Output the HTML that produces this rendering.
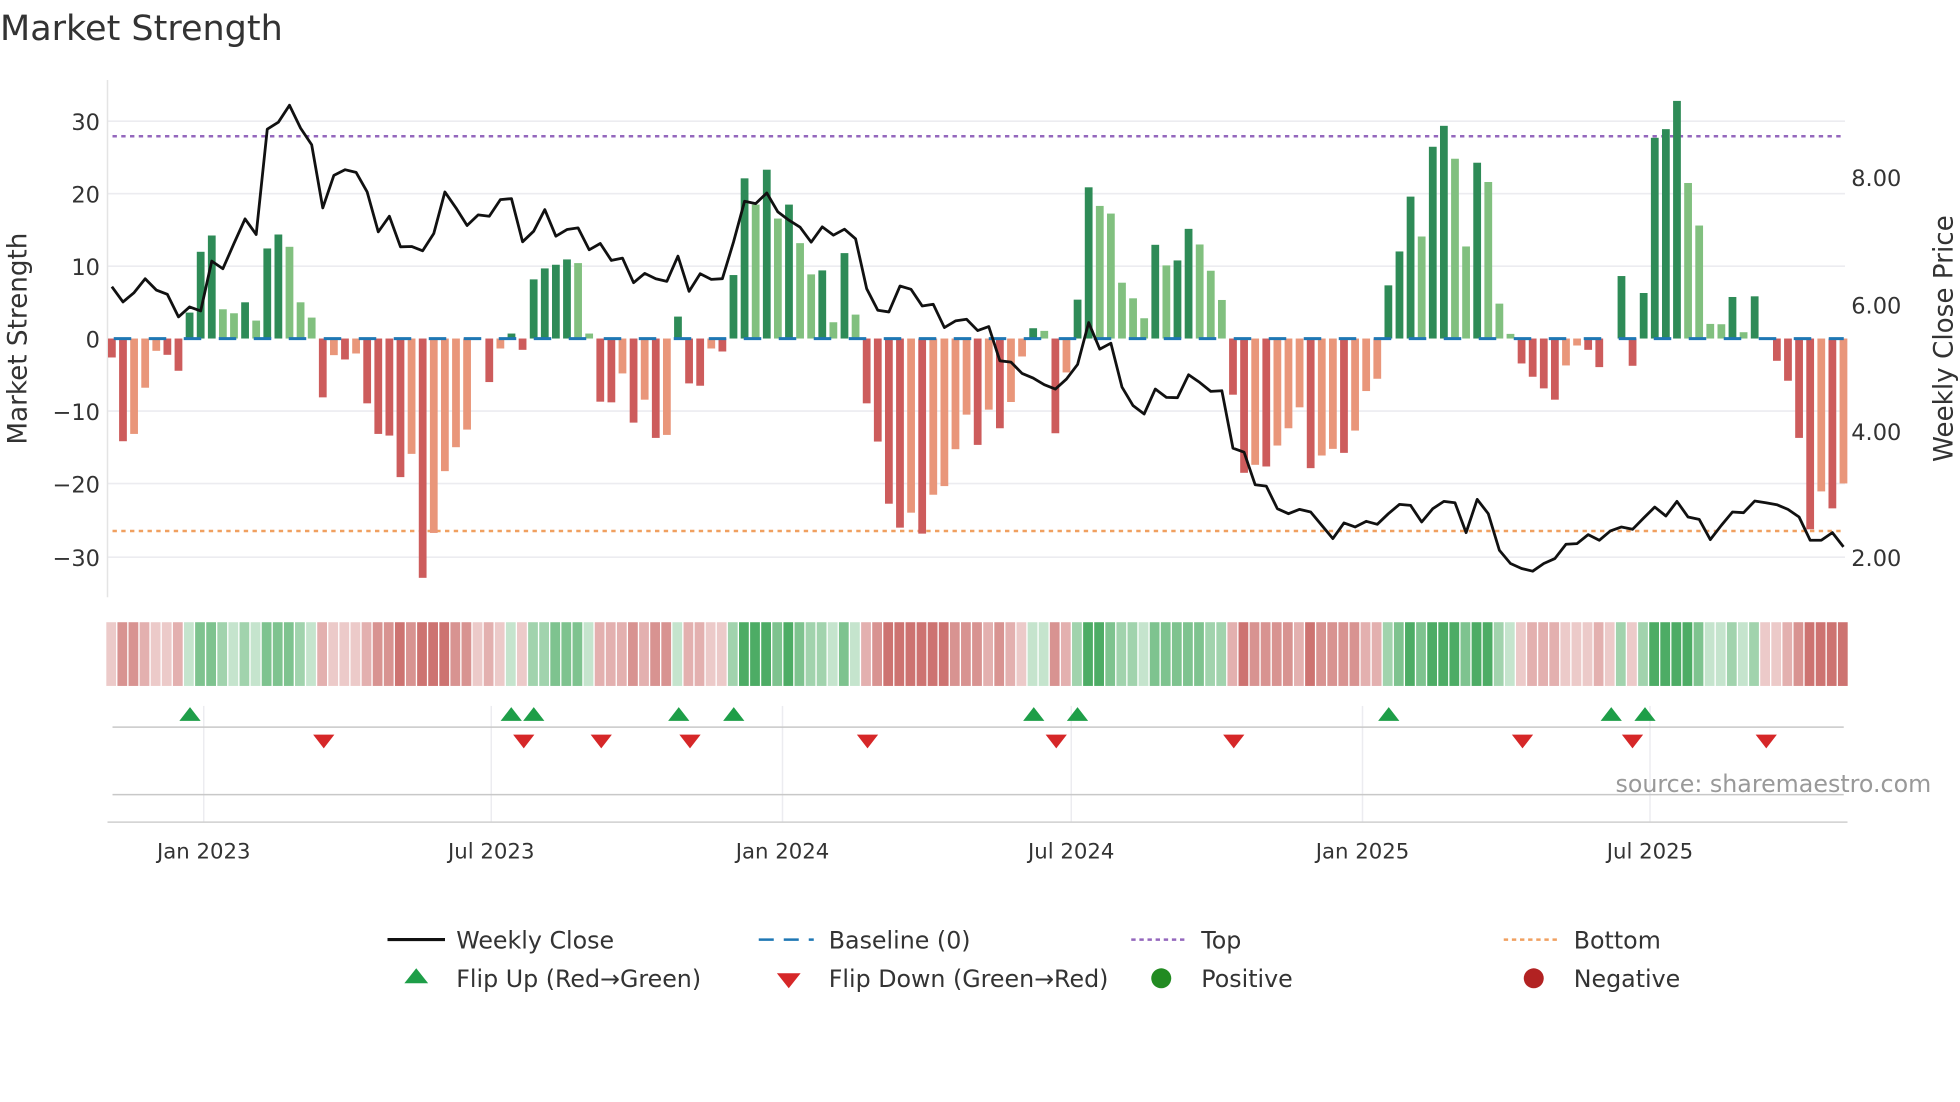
<!DOCTYPE html>
<html><head><meta charset="utf-8"><style>
html,body{margin:0;padding:0;background:#fff;}
svg{display:block;font-family:"DejaVu Sans","Liberation Sans",sans-serif;}
.a{fill:#2e8b57}.b{fill:#81c07f}.c{fill:#cd5c5c}.d{fill:#e9967a}
.r1{fill:#c0504d;opacity:.3}.r2{fill:#c0504d;opacity:.45}.r3{fill:#c0504d;opacity:.62}.r4{fill:#c0504d;opacity:.8}
.g1{fill:#2e9e4a;opacity:.28}.g2{fill:#2e9e4a;opacity:.45}.g3{fill:#2e9e4a;opacity:.62}.g4{fill:#2e9e4a;opacity:.85}
text{fill:#333}
</style></head><body>
<svg width="1960" height="1102" viewBox="0 0 1568 882" preserveAspectRatio="none">
<text x="0" y="32" font-size="28" fill="#333">Market Strength</text>
<g stroke="#ececf0" stroke-width="1.3">
<line x1="86" y1="97" x2="1476" y2="97"/><line x1="86" y1="155" x2="1476" y2="155"/><line x1="86" y1="213" x2="1476" y2="213"/><line x1="86" y1="329" x2="1476" y2="329"/><line x1="86" y1="387" x2="1476" y2="387"/><line x1="86" y1="446" x2="1476" y2="446"/>
</g>
<line x1="86" y1="64" x2="86" y2="478" stroke="#e4e4e4" stroke-width="1.2"/>
<g font-size="18" text-anchor="end">
<text x="80" y="104">30</text><text x="80" y="162">20</text><text x="80" y="220">10</text><text x="80" y="278">0</text><text x="80" y="336">−10</text><text x="80" y="394">−20</text><text x="80" y="453">−30</text>
</g>
<g font-size="18">
<text x="1481" y="149">8.00</text><text x="1481" y="251">6.00</text><text x="1481" y="352">4.00</text><text x="1481" y="453">2.00</text>
</g>
<text transform="translate(21,271) rotate(-90)" font-size="21" text-anchor="middle">Market Strength</text>
<text transform="translate(1562,271) rotate(-90)" font-size="21" text-anchor="middle">Weekly Close Price</text>
<line x1="90" y1="109" x2="1476" y2="109" stroke="#9467bd" stroke-width="2" stroke-dasharray="3.5 3.5"/>
<line x1="90" y1="425" x2="1476" y2="425" stroke="#f0a060" stroke-width="2" stroke-dasharray="3.5 3.5"/>
<g transform="translate(89.5,64) scale(8.88,0.266)">
<rect class="c" x="-.35" width=".7" y="778" height="57"/>
<rect class="c" x=".65" width=".7" y="778" height="309"/>
<rect class="d" x="1.65" width=".7" y="778" height="287"/>
<rect class="d" x="2.65" width=".7" y="778" height="148"/>
<rect class="d" x="3.65" width=".7" y="778" height="37"/>
<rect class="c" x="4.65" width=".7" y="778" height="49"/>
<rect class="c" x="5.65" width=".7" y="778" height="97"/>
<rect class="a" x="6.65" width=".7" y="700" height="78"/>
<rect class="a" x="7.65" width=".7" y="517" height="261"/>
<rect class="a" x="8.65" width=".7" y="468" height="310"/>
<rect class="b" x="9.65" width=".7" y="690" height="88"/>
<rect class="b" x="10.65" width=".7" y="702" height="76"/>
<rect class="a" x="11.65" width=".7" y="669" height="109"/>
<rect class="b" x="12.65" width=".7" y="724" height="54"/>
<rect class="a" x="13.65" width=".7" y="507" height="271"/>
<rect class="a" x="14.65" width=".7" y="465" height="313"/>
<rect class="b" x="15.65" width=".7" y="502" height="276"/>
<rect class="b" x="16.65" width=".7" y="669" height="109"/>
<rect class="b" x="17.65" width=".7" y="715" height="63"/>
<rect class="c" x="18.65" width=".7" y="778" height="177"/>
<rect class="d" x="19.65" width=".7" y="778" height="50"/>
<rect class="c" x="20.65" width=".7" y="778" height="63"/>
<rect class="d" x="21.65" width=".7" y="778" height="45"/>
<rect class="c" x="22.65" width=".7" y="778" height="195"/>
<rect class="c" x="23.65" width=".7" y="778" height="287"/>
<rect class="c" x="24.65" width=".7" y="778" height="292"/>
<rect class="c" x="25.65" width=".7" y="778" height="417"/>
<rect class="d" x="26.65" width=".7" y="778" height="347"/>
<rect class="c" x="27.65" width=".7" y="778" height="720"/>
<rect class="d" x="28.65" width=".7" y="778" height="585"/>
<rect class="d" x="29.65" width=".7" y="778" height="399"/>
<rect class="d" x="30.65" width=".7" y="778" height="327"/>
<rect class="d" x="31.65" width=".7" y="778" height="274"/>
<rect class="c" x="33.65" width=".7" y="778" height="131"/>
<rect class="d" x="34.65" width=".7" y="778" height="30"/>
<rect class="a" x="35.65" width=".7" y="763" height="15"/>
<rect class="c" x="36.65" width=".7" y="778" height="34"/>
<rect class="a" x="37.65" width=".7" y="600" height="178"/>
<rect class="a" x="38.65" width=".7" y="567" height="211"/>
<rect class="a" x="39.65" width=".7" y="556" height="222"/>
<rect class="a" x="40.65" width=".7" y="540" height="238"/>
<rect class="b" x="41.65" width=".7" y="551" height="227"/>
<rect class="b" x="42.65" width=".7" y="763" height="15"/>
<rect class="c" x="43.65" width=".7" y="778" height="190"/>
<rect class="c" x="44.65" width=".7" y="778" height="192"/>
<rect class="d" x="45.65" width=".7" y="778" height="105"/>
<rect class="c" x="46.65" width=".7" y="778" height="253"/>
<rect class="d" x="47.65" width=".7" y="778" height="184"/>
<rect class="c" x="48.65" width=".7" y="778" height="299"/>
<rect class="d" x="49.65" width=".7" y="778" height="290"/>
<rect class="a" x="50.65" width=".7" y="712" height="66"/>
<rect class="c" x="51.65" width=".7" y="778" height="135"/>
<rect class="c" x="52.65" width=".7" y="778" height="142"/>
<rect class="d" x="53.65" width=".7" y="778" height="30"/>
<rect class="c" x="54.65" width=".7" y="778" height="39"/>
<rect class="a" x="55.65" width=".7" y="587" height="191"/>
<rect class="a" x="56.65" width=".7" y="296" height="482"/>
<rect class="b" x="57.65" width=".7" y="375" height="403"/>
<rect class="a" x="58.65" width=".7" y="270" height="508"/>
<rect class="b" x="59.65" width=".7" y="417" height="361"/>
<rect class="a" x="60.65" width=".7" y="375" height="403"/>
<rect class="b" x="61.65" width=".7" y="491" height="287"/>
<rect class="b" x="62.65" width=".7" y="585" height="193"/>
<rect class="a" x="63.65" width=".7" y="573" height="205"/>
<rect class="b" x="64.65" width=".7" y="729" height="49"/>
<rect class="a" x="65.65" width=".7" y="521" height="257"/>
<rect class="b" x="66.65" width=".7" y="706" height="72"/>
<rect class="c" x="67.65" width=".7" y="778" height="195"/>
<rect class="c" x="68.65" width=".7" y="778" height="310"/>
<rect class="c" x="69.65" width=".7" y="778" height="497"/>
<rect class="c" x="70.65" width=".7" y="778" height="569"/>
<rect class="d" x="71.65" width=".7" y="778" height="524"/>
<rect class="c" x="72.65" width=".7" y="778" height="587"/>
<rect class="d" x="73.65" width=".7" y="778" height="470"/>
<rect class="d" x="74.65" width=".7" y="778" height="444"/>
<rect class="d" x="75.65" width=".7" y="778" height="333"/>
<rect class="d" x="76.65" width=".7" y="778" height="229"/>
<rect class="c" x="77.65" width=".7" y="778" height="320"/>
<rect class="d" x="78.65" width=".7" y="778" height="214"/>
<rect class="c" x="79.65" width=".7" y="778" height="270"/>
<rect class="d" x="80.65" width=".7" y="778" height="191"/>
<rect class="d" x="81.65" width=".7" y="778" height="54"/>
<rect class="a" x="82.65" width=".7" y="747" height="31"/>
<rect class="b" x="83.65" width=".7" y="755" height="23"/>
<rect class="c" x="84.65" width=".7" y="778" height="285"/>
<rect class="d" x="85.65" width=".7" y="778" height="102"/>
<rect class="a" x="86.65" width=".7" y="661" height="117"/>
<rect class="a" x="87.65" width=".7" y="323" height="455"/>
<rect class="b" x="88.65" width=".7" y="379" height="399"/>
<rect class="b" x="89.65" width=".7" y="402" height="376"/>
<rect class="b" x="90.65" width=".7" y="610" height="168"/>
<rect class="b" x="91.65" width=".7" y="657" height="121"/>
<rect class="b" x="92.65" width=".7" y="717" height="61"/>
<rect class="a" x="93.65" width=".7" y="496" height="282"/>
<rect class="b" x="94.65" width=".7" y="558" height="220"/>
<rect class="a" x="95.65" width=".7" y="543" height="235"/>
<rect class="a" x="96.65" width=".7" y="448" height="330"/>
<rect class="b" x="97.65" width=".7" y="495" height="283"/>
<rect class="b" x="98.65" width=".7" y="574" height="204"/>
<rect class="b" x="99.65" width=".7" y="662" height="116"/>
<rect class="c" x="100.65" width=".7" y="778" height="169"/>
<rect class="c" x="101.65" width=".7" y="778" height="404"/>
<rect class="d" x="102.65" width=".7" y="778" height="380"/>
<rect class="c" x="103.65" width=".7" y="778" height="385"/>
<rect class="d" x="104.65" width=".7" y="778" height="322"/>
<rect class="d" x="105.65" width=".7" y="778" height="270"/>
<rect class="d" x="106.65" width=".7" y="778" height="207"/>
<rect class="c" x="107.65" width=".7" y="778" height="390"/>
<rect class="d" x="108.65" width=".7" y="778" height="352"/>
<rect class="d" x="109.65" width=".7" y="778" height="332"/>
<rect class="c" x="110.65" width=".7" y="778" height="344"/>
<rect class="d" x="111.65" width=".7" y="778" height="277"/>
<rect class="d" x="112.65" width=".7" y="778" height="158"/>
<rect class="d" x="113.65" width=".7" y="778" height="121"/>
<rect class="a" x="114.65" width=".7" y="618" height="160"/>
<rect class="a" x="115.65" width=".7" y="516" height="262"/>
<rect class="a" x="116.65" width=".7" y="351" height="427"/>
<rect class="b" x="117.65" width=".7" y="471" height="307"/>
<rect class="a" x="118.65" width=".7" y="201" height="577"/>
<rect class="a" x="119.65" width=".7" y="138" height="640"/>
<rect class="b" x="120.65" width=".7" y="237" height="541"/>
<rect class="b" x="121.65" width=".7" y="501" height="277"/>
<rect class="a" x="122.65" width=".7" y="249" height="529"/>
<rect class="b" x="123.65" width=".7" y="307" height="471"/>
<rect class="b" x="124.65" width=".7" y="673" height="105"/>
<rect class="b" x="125.65" width=".7" y="764" height="14"/>
<rect class="c" x="126.65" width=".7" y="778" height="75"/>
<rect class="c" x="127.65" width=".7" y="778" height="115"/>
<rect class="c" x="128.65" width=".7" y="778" height="150"/>
<rect class="c" x="129.65" width=".7" y="778" height="184"/>
<rect class="d" x="130.65" width=".7" y="778" height="81"/>
<rect class="d" x="131.65" width=".7" y="778" height="21"/>
<rect class="c" x="132.65" width=".7" y="778" height="34"/>
<rect class="c" x="133.65" width=".7" y="778" height="86"/>
<rect class="a" x="135.65" width=".7" y="590" height="188"/>
<rect class="c" x="136.65" width=".7" y="778" height="82"/>
<rect class="a" x="137.65" width=".7" y="641" height="137"/>
<rect class="a" x="138.65" width=".7" y="174" height="604"/>
<rect class="a" x="139.65" width=".7" y="148" height="630"/>
<rect class="a" x="140.65" width=".7" y="63" height="715"/>
<rect class="b" x="141.65" width=".7" y="310" height="468"/>
<rect class="b" x="142.65" width=".7" y="438" height="340"/>
<rect class="b" x="143.65" width=".7" y="734" height="44"/>
<rect class="b" x="144.65" width=".7" y="735" height="43"/>
<rect class="a" x="145.65" width=".7" y="653" height="125"/>
<rect class="b" x="146.65" width=".7" y="759" height="19"/>
<rect class="a" x="147.65" width=".7" y="651" height="127"/>
<rect class="c" x="149.65" width=".7" y="778" height="67"/>
<rect class="c" x="150.65" width=".7" y="778" height="127"/>
<rect class="c" x="151.65" width=".7" y="778" height="299"/>
<rect class="c" x="152.65" width=".7" y="778" height="574"/>
<rect class="d" x="153.65" width=".7" y="778" height="460"/>
<rect class="c" x="154.65" width=".7" y="778" height="511"/>
<rect class="d" x="155.65" width=".7" y="778" height="436"/>
</g>
<line x1="91" y1="271" x2="1475" y2="271" stroke="#1f77b4" stroke-width="2.4" stroke-dasharray="14 14"/>
<g transform="translate(89.5,64) scale(8.88,0.266)">
<polyline fill="none" stroke="#111" stroke-width="2.8" stroke-linejoin="round" vector-effect="non-scaling-stroke" points="0,622 1,668 2,640 3,598 4,632 5,645 6,713 7,683 8,695 9,545 10,568 11,492 12,418 13,465 14,148 15,127 16,76 17,145 18,195 19,385 20,287 21,270 22,278 23,337 24,457 25,410 26,502 27,501 28,514 29,462 30,337 31,385 32,438 33,406 34,410 35,360 36,357 37,487 38,455 39,390 40,470 41,450 42,445 43,511 44,492 45,543 46,536 47,610 48,582 49,598 50,606 51,530 52,636 53,583 54,600 55,598 56,488 57,365 58,372 59,340 60,397 61,422 62,443 63,488 64,442 65,467 66,449 67,478 68,628 69,693 70,698 71,620 72,630 73,680 74,675 75,745 76,725 77,720 78,754 79,742 80,845 81,849 82,883 83,897 84,917 85,930 86,900 87,856 88,730 89,810 90,792 91,924 92,980 93,1005 94,930 95,955 96,956 97,887 98,910 99,937 100,935 101,1108 102,1120 103,1218 104,1222 105,1290 106,1305 107,1292 108,1300 109,1340 110,1380 111,1333 112,1345 113,1328 114,1337 115,1305 116,1277 117,1280 118,1330 119,1290 120,1268 121,1272 122,1362 123,1262 124,1305 125,1415 126,1455 127,1470 128,1478 129,1455 130,1440 131,1397 132,1395 133,1368 134,1385 135,1357 136,1345 137,1352 138,1318 139,1285 140,1312 141,1268 142,1315 143,1322 144,1383 145,1340 146,1300 147,1302 148,1267 149,1272 150,1278 151,1292 152,1315 153,1385 154,1385 155,1362 156,1405"/>
</g>
<g transform="translate(89.5,498) scale(8.88,1)">
<rect class="r1" x="-.5" width=".88" height="51"/><rect class="r3" x=".5" width=".88" height="51"/><rect class="r3" x="1.5" width=".88" height="51"/><rect class="r2" x="2.5" width=".88" height="51"/><rect class="r1" x="3.5" width=".88" height="51"/><rect class="r1" x="4.5" width=".88" height="51"/><rect class="r2" x="5.5" width=".88" height="51"/><rect class="g1" x="6.5" width=".88" height="51"/><rect class="g3" x="7.5" width=".88" height="51"/><rect class="g3" x="8.5" width=".88" height="51"/>
<rect class="g2" x="9.5" width=".88" height="51"/><rect class="g1" x="10.5" width=".88" height="51"/><rect class="g2" x="11.5" width=".88" height="51"/><rect class="g1" x="12.5" width=".88" height="51"/><rect class="g3" x="13.5" width=".88" height="51"/><rect class="g3" x="14.5" width=".88" height="51"/><rect class="g3" x="15.5" width=".88" height="51"/><rect class="g2" x="16.5" width=".88" height="51"/><rect class="g1" x="17.5" width=".88" height="51"/><rect class="r2" x="18.5" width=".88" height="51"/>
<rect class="r1" x="19.5" width=".88" height="51"/><rect class="r1" x="20.5" width=".88" height="51"/><rect class="r1" x="21.5" width=".88" height="51"/><rect class="r2" x="22.5" width=".88" height="51"/><rect class="r3" x="23.5" width=".88" height="51"/><rect class="r3" x="24.5" width=".88" height="51"/><rect class="r4" x="25.5" width=".88" height="51"/><rect class="r3" x="26.5" width=".88" height="51"/><rect class="r4" x="27.5" width=".88" height="51"/><rect class="r4" x="28.5" width=".88" height="51"/>
<rect class="r4" x="29.5" width=".88" height="51"/><rect class="r3" x="30.5" width=".88" height="51"/><rect class="r3" x="31.5" width=".88" height="51"/><rect class="r1" x="32.5" width=".88" height="51"/><rect class="r2" x="33.5" width=".88" height="51"/><rect class="r1" x="34.5" width=".88" height="51"/><rect class="g1" x="35.5" width=".88" height="51"/><rect class="r1" x="36.5" width=".88" height="51"/><rect class="g2" x="37.5" width=".88" height="51"/><rect class="g2" x="38.5" width=".88" height="51"/>
<rect class="g3" x="39.5" width=".88" height="51"/><rect class="g3" x="40.5" width=".88" height="51"/><rect class="g3" x="41.5" width=".88" height="51"/><rect class="g1" x="42.5" width=".88" height="51"/><rect class="r2" x="43.5" width=".88" height="51"/><rect class="r2" x="44.5" width=".88" height="51"/><rect class="r2" x="45.5" width=".88" height="51"/><rect class="r3" x="46.5" width=".88" height="51"/><rect class="r2" x="47.5" width=".88" height="51"/><rect class="r3" x="48.5" width=".88" height="51"/>
<rect class="r3" x="49.5" width=".88" height="51"/><rect class="g1" x="50.5" width=".88" height="51"/><rect class="r2" x="51.5" width=".88" height="51"/><rect class="r2" x="52.5" width=".88" height="51"/><rect class="r1" x="53.5" width=".88" height="51"/><rect class="r1" x="54.5" width=".88" height="51"/><rect class="g2" x="55.5" width=".88" height="51"/><rect class="g4" x="56.5" width=".88" height="51"/><rect class="g4" x="57.5" width=".88" height="51"/><rect class="g4" x="58.5" width=".88" height="51"/>
<rect class="g3" x="59.5" width=".88" height="51"/><rect class="g4" x="60.5" width=".88" height="51"/><rect class="g3" x="61.5" width=".88" height="51"/><rect class="g2" x="62.5" width=".88" height="51"/><rect class="g2" x="63.5" width=".88" height="51"/><rect class="g1" x="64.5" width=".88" height="51"/><rect class="g3" x="65.5" width=".88" height="51"/><rect class="g1" x="66.5" width=".88" height="51"/><rect class="r2" x="67.5" width=".88" height="51"/><rect class="r3" x="68.5" width=".88" height="51"/>
<rect class="r4" x="69.5" width=".88" height="51"/><rect class="r4" x="70.5" width=".88" height="51"/><rect class="r4" x="71.5" width=".88" height="51"/><rect class="r4" x="72.5" width=".88" height="51"/><rect class="r4" x="73.5" width=".88" height="51"/><rect class="r4" x="74.5" width=".88" height="51"/><rect class="r3" x="75.5" width=".88" height="51"/><rect class="r3" x="76.5" width=".88" height="51"/><rect class="r3" x="77.5" width=".88" height="51"/><rect class="r2" x="78.5" width=".88" height="51"/>
<rect class="r3" x="79.5" width=".88" height="51"/><rect class="r2" x="80.5" width=".88" height="51"/><rect class="r1" x="81.5" width=".88" height="51"/><rect class="g1" x="82.5" width=".88" height="51"/><rect class="g1" x="83.5" width=".88" height="51"/><rect class="r3" x="84.5" width=".88" height="51"/><rect class="r2" x="85.5" width=".88" height="51"/><rect class="g2" x="86.5" width=".88" height="51"/><rect class="g4" x="87.5" width=".88" height="51"/><rect class="g4" x="88.5" width=".88" height="51"/>
<rect class="g3" x="89.5" width=".88" height="51"/><rect class="g2" x="90.5" width=".88" height="51"/><rect class="g2" x="91.5" width=".88" height="51"/><rect class="g1" x="92.5" width=".88" height="51"/><rect class="g3" x="93.5" width=".88" height="51"/><rect class="g3" x="94.5" width=".88" height="51"/><rect class="g3" x="95.5" width=".88" height="51"/><rect class="g3" x="96.5" width=".88" height="51"/><rect class="g3" x="97.5" width=".88" height="51"/><rect class="g2" x="98.5" width=".88" height="51"/>
<rect class="g2" x="99.5" width=".88" height="51"/><rect class="r2" x="100.5" width=".88" height="51"/><rect class="r4" x="101.5" width=".88" height="51"/><rect class="r3" x="102.5" width=".88" height="51"/><rect class="r3" x="103.5" width=".88" height="51"/><rect class="r3" x="104.5" width=".88" height="51"/><rect class="r3" x="105.5" width=".88" height="51"/><rect class="r2" x="106.5" width=".88" height="51"/><rect class="r4" x="107.5" width=".88" height="51"/><rect class="r3" x="108.5" width=".88" height="51"/>
<rect class="r3" x="109.5" width=".88" height="51"/><rect class="r3" x="110.5" width=".88" height="51"/><rect class="r3" x="111.5" width=".88" height="51"/><rect class="r2" x="112.5" width=".88" height="51"/><rect class="r2" x="113.5" width=".88" height="51"/><rect class="g2" x="114.5" width=".88" height="51"/><rect class="g3" x="115.5" width=".88" height="51"/><rect class="g4" x="116.5" width=".88" height="51"/><rect class="g3" x="117.5" width=".88" height="51"/><rect class="g4" x="118.5" width=".88" height="51"/>
<rect class="g4" x="119.5" width=".88" height="51"/><rect class="g4" x="120.5" width=".88" height="51"/><rect class="g3" x="121.5" width=".88" height="51"/><rect class="g4" x="122.5" width=".88" height="51"/><rect class="g4" x="123.5" width=".88" height="51"/><rect class="g2" x="124.5" width=".88" height="51"/><rect class="g1" x="125.5" width=".88" height="51"/><rect class="r1" x="126.5" width=".88" height="51"/><rect class="r2" x="127.5" width=".88" height="51"/><rect class="r2" x="128.5" width=".88" height="51"/>
<rect class="r2" x="129.5" width=".88" height="51"/><rect class="r1" x="130.5" width=".88" height="51"/><rect class="r1" x="131.5" width=".88" height="51"/><rect class="r1" x="132.5" width=".88" height="51"/><rect class="r2" x="133.5" width=".88" height="51"/><rect class="r1" x="134.5" width=".88" height="51"/><rect class="g2" x="135.5" width=".88" height="51"/><rect class="r1" x="136.5" width=".88" height="51"/><rect class="g2" x="137.5" width=".88" height="51"/><rect class="g4" x="138.5" width=".88" height="51"/>
<rect class="g4" x="139.5" width=".88" height="51"/><rect class="g4" x="140.5" width=".88" height="51"/><rect class="g4" x="141.5" width=".88" height="51"/><rect class="g3" x="142.5" width=".88" height="51"/><rect class="g1" x="143.5" width=".88" height="51"/><rect class="g1" x="144.5" width=".88" height="51"/><rect class="g2" x="145.5" width=".88" height="51"/><rect class="g1" x="146.5" width=".88" height="51"/><rect class="g2" x="147.5" width=".88" height="51"/><rect class="r1" x="148.5" width=".88" height="51"/>
<rect class="r1" x="149.5" width=".88" height="51"/><rect class="r2" x="150.5" width=".88" height="51"/><rect class="r3" x="151.5" width=".88" height="51"/><rect class="r4" x="152.5" width=".88" height="51"/><rect class="r4" x="153.5" width=".88" height="51"/><rect class="r4" x="154.5" width=".88" height="51"/><rect class="r4" x="155.5" width=".88" height="51"/>
</g>
<g stroke="#ececf0" stroke-width="1.2">
<line x1="163" y1="565" x2="163" y2="658"/><line x1="393" y1="565" x2="393" y2="658"/><line x1="626" y1="565" x2="626" y2="658"/><line x1="857" y1="565" x2="857" y2="658"/><line x1="1090" y1="565" x2="1090" y2="658"/><line x1="1320" y1="565" x2="1320" y2="658"/>
</g>
<line x1="90" y1="582" x2="1475" y2="582" stroke="#c8c8c8" stroke-width="1.2"/>
<line x1="90" y1="636" x2="1475" y2="636" stroke="#c8c8c8" stroke-width="1.2"/>
<line x1="86" y1="658" x2="1478" y2="658" stroke="#cfcfcf" stroke-width="1.2"/>
<g fill="#1e9e48">
<path d="M152 566l-8.5 11h17z"/><path d="M409 566l-8.5 11h17z"/><path d="M427 566l-8.5 11h17z"/><path d="M543 566l-8.5 11h17z"/><path d="M587 566l-8.5 11h17z"/><path d="M827 566l-8.5 11h17z"/><path d="M862 566l-8.5 11h17z"/><path d="M1111 566l-8.5 11h17z"/><path d="M1289 566l-8.5 11h17z"/><path d="M1316 566l-8.5 11h17z"/>
</g>
<g fill="#d62728">
<path d="M259 599l-8.5-11h17z"/><path d="M419 599l-8.5-11h17z"/><path d="M481 599l-8.5-11h17z"/><path d="M552 599l-8.5-11h17z"/><path d="M694 599l-8.5-11h17z"/><path d="M845 599l-8.5-11h17z"/><path d="M987 599l-8.5-11h17z"/><path d="M1218 599l-8.5-11h17z"/><path d="M1306 599l-8.5-11h17z"/><path d="M1413 599l-8.5-11h17z"/>
</g>
<text x="1545" y="634" font-size="19" text-anchor="end" style="fill:#999">source: sharemaestro.com</text>
<g font-size="17" text-anchor="middle">
<text x="163" y="687">Jan 2023</text><text x="393" y="687">Jul 2023</text><text x="626" y="687">Jan 2024</text><text x="857" y="687">Jul 2024</text><text x="1090" y="687">Jan 2025</text><text x="1320" y="687">Jul 2025</text>
</g>
<line x1="310" y1="752" x2="356" y2="752" stroke="#111" stroke-width="2.5"/>
<line x1="607" y1="752" x2="651" y2="752" stroke="#1f77b4" stroke-width="2" stroke-dasharray="12 8"/>
<line x1="905" y1="752" x2="949" y2="752" stroke="#9467bd" stroke-width="2" stroke-dasharray="3.5 3"/>
<line x1="1203" y1="752" x2="1247" y2="752" stroke="#f0a060" stroke-width="2" stroke-dasharray="3.5 3"/>
<path d="M333 775l-9.5 12h19z" fill="#1e9e48"/>
<path d="M631 791l-9.5-12h19z" fill="#d62728"/>
<circle cx="929" cy="783" r="8" fill="#228b22"/>
<circle cx="1227" cy="783" r="8" fill="#b22222"/>
<g font-size="19">
<text x="365" y="759">Weekly Close</text><text x="663" y="759">Baseline (0)</text><text x="961" y="759">Top</text><text x="1259" y="759">Bottom</text>
<text x="365" y="790">Flip Up (Red→Green)</text><text x="663" y="790">Flip Down (Green→Red)</text><text x="961" y="790">Positive</text><text x="1259" y="790">Negative</text>
</g>
</svg>
</body></html>
